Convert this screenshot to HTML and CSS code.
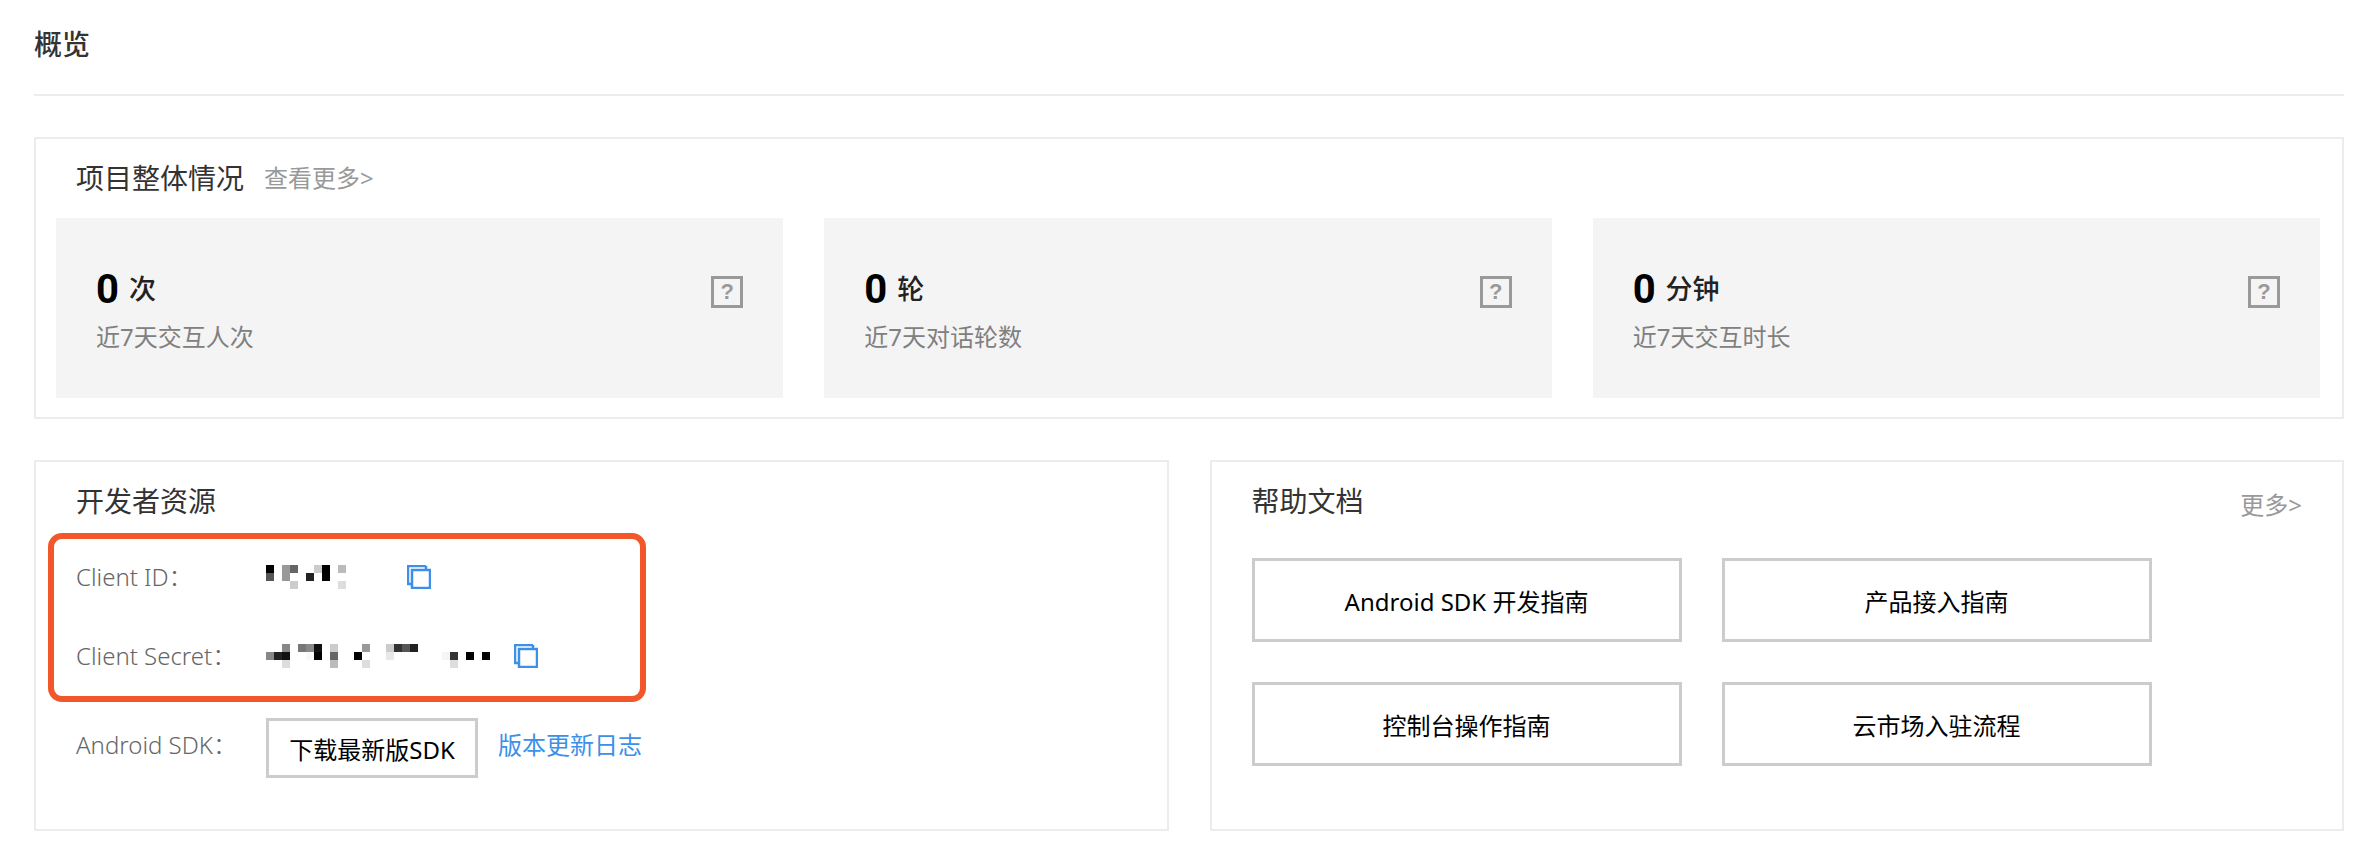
FILE: index.html
```html
<!DOCTYPE html>
<html lang="zh-CN">
<head>
<meta charset="utf-8">
<title>概览</title>
<link rel="stylesheet" href="styles.css">
</head>
<body>
<main class="page">
  <header class="page-head">概览</header>

  <section class="panel overview">
    <div class="overview-head">
      <h2 class="panel-title">项目整体情况</h2>
      <a class="more">查看更多&gt;</a>
    </div>
    <div class="stats">
      <div class="stat">
        <div class="stat-main">
          <div class="stat-value"><b class="num">0</b><span class="unit">次</span></div>
          <span class="help">?</span>
        </div>
        <div class="stat-label">近7天交互人次</div>
      </div>
      <div class="stat">
        <div class="stat-main">
          <div class="stat-value"><b class="num">0</b><span class="unit">轮</span></div>
          <span class="help">?</span>
        </div>
        <div class="stat-label">近7天对话轮数</div>
      </div>
      <div class="stat">
        <div class="stat-main">
          <div class="stat-value"><b class="num">0</b><span class="unit">分钟</span></div>
          <span class="help">?</span>
        </div>
        <div class="stat-label">近7天交互时长</div>
      </div>
    </div>
  </section>

  <div class="columns">
    <section class="panel dev">
      <h2 class="panel-title">开发者资源</h2>
      <div class="cred-row row-id">
        <span class="label">Client ID：</span>
        <svg class="mosaic mosaic-id" viewBox="0 0 141 24" aria-hidden="true">
          <rect x="0" y="0" width="8" height="8" fill="#000"/><rect x="0" y="8" width="8" height="8" fill="#555"/>
          <rect x="16" y="0" width="8" height="8" fill="#999"/><rect x="16" y="8" width="8" height="8" fill="#999"/>
          <rect x="24" y="0" width="8" height="8" fill="#666"/><rect x="24" y="16" width="8" height="8" fill="#ccc"/>
          <rect x="40" y="8" width="8" height="8" fill="#222"/><rect x="48" y="0" width="8" height="8" fill="#ccc"/>
          <rect x="56" y="0" width="8" height="8" fill="#000"/><rect x="56" y="8" width="8" height="8" fill="#000"/>
          <rect x="72" y="0" width="8" height="8" fill="#bbb"/><rect x="72" y="16" width="8" height="8" fill="#ddd"/>
        </svg>
        <svg class="copy" viewBox="0 0 24 24" aria-hidden="true"><path d="M19 1H1v18h3"/><rect x="5" y="5" width="18" height="18"/><path d="M19 1v4"/></svg>
      </div>
      <div class="cred-row row-secret">
        <span class="label">Client Secret：</span>
        <svg class="mosaic mosaic-secret" viewBox="0 0 248 24" aria-hidden="true">
          <rect x="0" y="8" width="8" height="8" fill="#888"/><rect x="8" y="8" width="8" height="8" fill="#222"/>
          <rect x="16" y="0" width="8" height="8" fill="#888"/><rect x="16" y="8" width="8" height="8" fill="#111"/><rect x="16" y="16" width="8" height="8" fill="#ddd"/>
          <rect x="32" y="0" width="8" height="8" fill="#777"/><rect x="40" y="0" width="8" height="8" fill="#888"/><rect x="40" y="8" width="8" height="8" fill="#f8f8f8"/>
          <rect x="48" y="0" width="8" height="8" fill="#111"/><rect x="48" y="8" width="8" height="8" fill="#000"/>
          <rect x="64" y="0" width="8" height="8" fill="#ccc"/><rect x="64" y="8" width="8" height="8" fill="#666"/><rect x="64" y="16" width="8" height="8" fill="#bbb"/>
          <rect x="88" y="8" width="8" height="8" fill="#000"/><rect x="96" y="0" width="8" height="8" fill="#999"/><rect x="96" y="16" width="8" height="8" fill="#ddd"/>
          <rect x="120" y="0" width="8" height="8" fill="#ccc"/><rect x="120" y="8" width="8" height="8" fill="#e8e8e8"/>
          <rect x="128" y="0" width="8" height="8" fill="#333"/><rect x="136" y="0" width="8" height="8" fill="#555"/><rect x="144" y="0" width="8" height="8" fill="#222"/>
          <rect x="176" y="8" width="8" height="8" fill="#f5f5f5"/><rect x="184" y="8" width="8" height="8" fill="#333"/><rect x="184" y="16" width="8" height="8" fill="#ddd"/>
          <rect x="200" y="8" width="8" height="8" fill="#000"/><rect x="216" y="8" width="8" height="8" fill="#000"/>
        </svg>
        <svg class="copy" viewBox="0 0 24 24" aria-hidden="true"><path d="M19 1H1v18h3"/><rect x="5" y="5" width="18" height="18"/><path d="M19 1v4"/></svg>
      </div>
      <div class="sdk-row">
        <span class="label">Android SDK：</span>
        <a class="btn btn-sdk">下载最新版SDK</a>
        <a class="link">版本更新日志</a>
      </div>
      <div class="callout"></div>
    </section>

    <section class="panel docs">
      <div class="docs-head">
        <h2 class="panel-title">帮助文档</h2>
        <a class="more more-docs">更多&gt;</a>
      </div>
      <div class="doc-grid">
        <a class="btn btn-doc">Android SDK 开发指南</a>
        <a class="btn btn-doc">产品接入指南</a>
        <a class="btn btn-doc">控制台操作指南</a>
        <a class="btn btn-doc">云市场入驻流程</a>
      </div>
    </section>
  </div>
</main>
</body>
</html>
```

FILE: styles.css
```css
* { box-sizing: border-box; }

html, body {
  margin: 0;
  background: #fff;
}

body {
  font-family: "Noto Sans", "Noto Sans CJK SC", sans-serif;
  font-size: 24px;
  color: #333;
}

.page {
  padding: 0 30px 0 34px;
}

.page-head {
  height: 96px;
  padding-top: 24px;
  line-height: 40px;
  font-size: 28px;
  font-weight: 500;
  color: #333;
  border-bottom: 2px solid #ececec;
  margin-bottom: 41px;
}

.panel {
  border: 2px solid #ececec;
  background: #fff;
}

.panel-title {
  margin: 0;
  font-size: 28px;
  font-weight: 400;
  line-height: 40px;
  color: #333;
}

.more {
  font-size: 24px;
  color: #999;
  line-height: 40px;
}

.overview {
  height: 282px;
  padding: 0 22px 0 20px;
}

.overview-head {
  display: flex;
  align-items: flex-start;
  gap: 20px;
  padding: 19px 0 0 20px;
  height: 79px;
}

.stats {
  display: flex;
  gap: 41px;
}

.stat {
  flex: 1;
  height: 180px;
  background: #f4f4f4;
  padding: 50px 40px 0;
}

.stat-main {
  display: flex;
  justify-content: space-between;
  align-items: flex-start;
}

.stat-value {
  display: flex;
  align-items: center;
  gap: 10px;
  height: 44px;
}

.num {
  font-family: "Roboto", "Noto Sans", sans-serif;
  font-size: 40px;
  font-weight: 700;
  color: #000;
  line-height: 44px;
}

.unit {
  font-size: 27px;
  font-weight: 500;
  line-height: 40px;
  margin-top: -3px;
  color: #222;
}

.help {
  width: 32px;
  height: 32px;
  margin-top: 8px;
  border: 3px solid #999;
  display: flex;
  align-items: center;
  justify-content: center;
  font-family: "Liberation Sans", sans-serif;
  font-size: 22px;
  font-weight: 700;
  color: #999;
}

.stat-label {
  margin-top: 8px;
  line-height: 34px;
  font-size: 24px;
  color: #808080;
}

.columns {
  display: grid;
  grid-template-columns: 1fr 1fr;
  gap: 41px;
  margin-top: 41px;
}

.columns .panel {
  height: 371px;
}

.dev {
  position: relative;
  padding: 19px 0 0 40px;
}

.cred-row {
  display: flex;
  align-items: center;
  height: 40px;
}

.row-id {
  margin-top: 36px;
}

.row-secret {
  margin-top: 39px;
}

.label {
  width: 190px;
  flex: none;
  color: #666;
  font-size: 24px;
  font-weight: 300;
  line-height: 40px;
}

.mosaic {
  flex: none;
  height: 24px;
}

.mosaic-id {
  width: 141px;
}

.mosaic-secret {
  width: 248px;
}

.copy {
  flex: none;
  width: 24px;
  height: 24px;
  fill: none;
  stroke: #3d8fe8;
  stroke-width: 2.5;
}

.sdk-row {
  display: flex;
  align-items: flex-start;
  margin-top: 42px;
}

.sdk-row .label {
  line-height: 54px;
}

.btn {
  display: flex;
  align-items: center;
  justify-content: center;
  border: 3px solid #ccc;
  background: #fff;
  color: #000;
  font-size: 24px;
}

.btn-sdk {
  width: 212px;
  height: 60px;
}

.link {
  margin-left: 20px;
  line-height: 54px;
  font-size: 24px;
  color: #3d8fe8;
}

.callout {
  position: absolute;
  left: 12px;
  top: 71px;
  width: 598px;
  height: 169px;
  border: 6px solid #f2572b;
  border-radius: 14px;
}

.docs {
  padding: 19px 40px 0;
}

.docs-head {
  display: flex;
  justify-content: space-between;
  align-items: flex-start;
}

.more-docs {
  margin-top: 4px;
}

.doc-grid {
  display: grid;
  grid-template-columns: 430px 430px;
  grid-auto-rows: 84px;
  gap: 40px;
  margin-top: 33px;
}
```
